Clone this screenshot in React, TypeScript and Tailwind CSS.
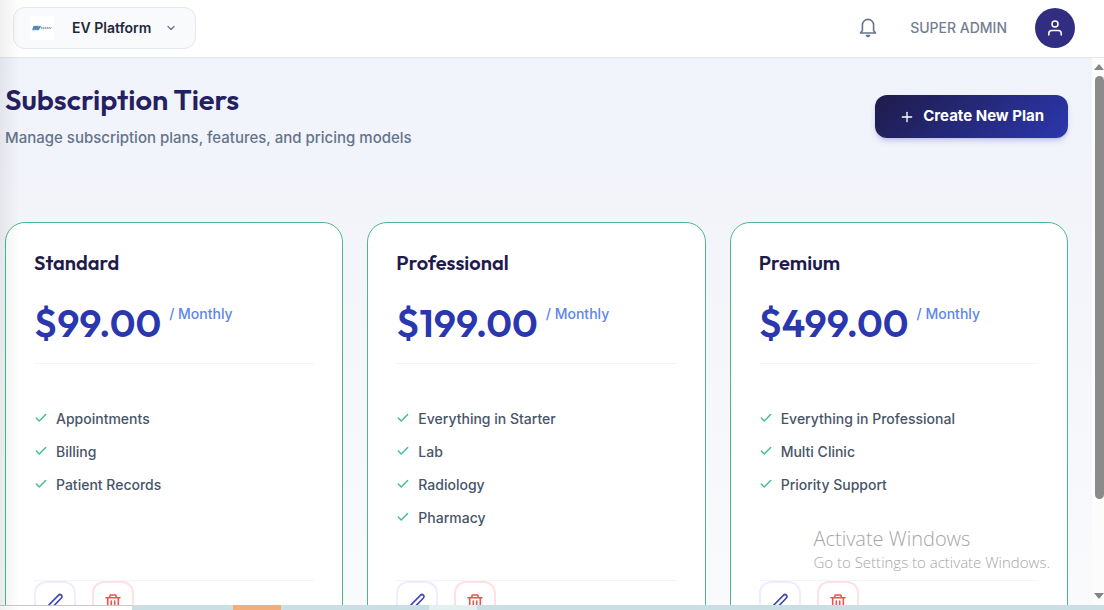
import React from "react";
import { Check, ChevronDown, Plus } from "lucide-react";

type Plan = { name: string; price: string; features: string[] };

const plans: Plan[] = [
  { name: "Standard", price: "$99.00", features: ["Appointments", "Billing", "Patient Records"] },
  { name: "Professional", price: "$199.00", features: ["Everything in Starter", "Lab", "Radiology", "Pharmacy"] },
  { name: "Premium", price: "$499.00", features: ["Everything in Professional", "Multi Clinic", "Priority Support"] },
];

function BellIcon() {
  return (
    <svg viewBox="0 0 24 24" className="h-6 w-6" fill="none" stroke="currentColor" strokeWidth="1.6" strokeLinecap="round" strokeLinejoin="round">
      <path d="M4.5 17h15M6.4 14.6V9a5.6 5.6 0 0 1 11.2 0v5.6M6.4 14.5L4.5 17M17.6 14.5l1.9 2.5" />
      <path d="M10.5 19.6h3l-1.5 1z" fill="currentColor" />
    </svg>
  );
}

function UserIcon() {
  return (
    <svg viewBox="0 0 16 16" className="h-4 w-4" fill="none" stroke="currentColor" strokeWidth="1.5" strokeLinecap="round">
      <circle cx="8" cy="4" r="3" />
      <path d="M1.8 15v-1.5a3 3 0 0 1 3-3h6.4a3 3 0 0 1 3 3V15" />
    </svg>
  );
}

function PencilIcon() {
  return (
    <svg viewBox="0 0 18 18" className="h-[18px] w-[18px]" fill="none" stroke="currentColor" strokeWidth="1.7" strokeLinejoin="round">
      <path d="M2 16l.8-4L12.6 2.2a1.9 1.9 0 0 1 2.8 2.8L5.8 14.9z" />
    </svg>
  );
}

function TrashIcon() {
  return (
    <svg viewBox="0 0 18 18" className="h-[18px] w-[18px]" fill="none" stroke="currentColor" strokeWidth="1.6" strokeLinecap="round" strokeLinejoin="round">
      <path d="M2 4.7h14M5.5 4.5l.8-2.5h5.4l.8 2.5M3.7 4.7V16h10.6V4.7M7.3 8v5M10.7 8v5" />
    </svg>
  );
}

function LogoMark() {
  return (
    <span className="flex h-6 w-6 items-center justify-center bg-white">
      <svg viewBox="0 0 20 6" className="h-[6px] w-5">
        <path d="M1.5.8h7L7 5.2H0z" fill="#78a9cf" />
        <path d="M1 2.2h4M.8 4h4M5 1l1 3.5L8.5 1" fill="none" stroke="#3972a5" strokeWidth="0.9" />
        <path d="M8.5 2.4h11M9 3.6h10" stroke="#7b828c" strokeWidth="0.8" strokeDasharray="1.5 .6" />
      </svg>
    </span>
  );
}

function PlanCard({ plan }: { plan: Plan }) {
  return (
    <article className="flex min-w-0 flex-col rounded-[20px] border border-[#4eb58c] bg-white px-7 pt-7">
      <h2 className="font-[Outfit,Lato,sans-serif] text-xl leading-6 font-semibold text-[#1e1b4b]">{plan.name}</h2>
      <div className="mt-6 flex h-[65px] items-start gap-2 border-b border-[#f1f5f9]">
        <span className="font-[Outfit,Lato,sans-serif] text-[39px] leading-12 font-semibold text-[#2b37ae]">{plan.price}</span>
        <span className="pt-[3px] text-sm leading-6 font-medium text-[#5b86ed]">/ Monthly</span>
      </div>
      <ul className="mt-11 flex min-h-[172px] flex-col gap-3">
        {plan.features.map((feature) => (
          <li key={feature} className="flex items-center gap-2 text-sm leading-[21px] font-medium text-[#475569]">
            <Check className="mb-0.5 h-[14px] w-[14px] text-[#45bd91]" strokeWidth={2.5} />
            {feature}
          </li>
        ))}
      </ul>
      <div className="flex gap-4 border-t border-[#f1f5f9] pb-7">
        <button aria-label={`Edit ${plan.name}`} className="flex h-[42px] w-[42px] items-center justify-center rounded-xl border-2 border-[#eeecff] text-[#4247b2]">
          <PencilIcon />
        </button>
        <button aria-label={`Delete ${plan.name}`} className="flex h-[42px] w-[42px] items-center justify-center rounded-xl border-2 border-[#fee2e2] text-[#e9544f]">
          <TrashIcon />
        </button>
      </div>
    </article>
  );
}

export default function App() {
  return (
    <div className="relative flex h-screen flex-col overflow-hidden bg-white font-[Inter,sans-serif]">
      <header className="flex h-[58px] shrink-0 items-center justify-between border-b border-[#e2e5e9] pr-[29px] pb-px pl-[13px]">
        <button className="flex h-[42px] items-center rounded-xl border border-[#e2e8f0] bg-[#f9fafc] px-4 text-sm font-semibold text-[#1e293b]">
          <LogoMark />
          <span className="ml-[18px]">EV Platform</span>
          <ChevronDown className="ml-[14px] h-3 w-3 text-[#64748b]" strokeWidth={2.5} />
          <span className="w-0.5" />
        </button>
        <div className="flex items-center">
          <button aria-label="Notifications" className="text-[#64748b]"><BellIcon /></button>
          <span className="ml-[30px] text-sm font-medium text-[#757e91]">SUPER ADMIN</span>
          <button aria-label="Account" className="ml-7 flex h-10 w-10 items-center justify-center rounded-full bg-[#312e81] text-white"><UserIcon /></button>
        </div>
      </header>
      <div className="flex min-h-0 flex-1">
        <main className="min-w-0 flex-1 overflow-hidden bg-linear-to-b from-[#f1f3fb] via-[#f4f6fa] to-[#f8fafc] pr-6 pl-[5px]">
          <div className="flex items-start justify-between pt-6">
            <div>
              <h1 className="font-[Outfit,Lato,sans-serif] text-[29px] leading-9 font-semibold text-[#242061]">Subscription Tiers</h1>
              <p className="mt-2 text-[15px] leading-6 font-medium text-[#64748b]">Manage subscription plans, features, and pricing models</p>
            </div>
            <button className="mt-[13px] flex h-[43px] items-center gap-2 rounded-xl bg-linear-135 from-[#1e1b4b] to-[#2b37ae] px-6 text-[15px] font-bold text-white shadow-md shadow-[#2b37ae]/20">
              <Plus className="h-4 w-4" strokeWidth={2} />
              Create New Plan
            </button>
          </div>
          <section className="mt-[72px] grid grid-cols-3 gap-6">
            {plans.map((plan) => <PlanCard key={plan.name} plan={plan} />)}
          </section>
        </main>
        <div className="flex w-3 shrink-0 flex-col items-end justify-between bg-[#fcfcfc] pt-[6px] pb-[6px]">
          <svg viewBox="0 0 10 6" className="h-[6px] w-[10px]"><path d="M0 6 5 0l5 6z" fill="#858585" /></svg>
          <div className="mt-[6px] mb-auto h-[79%] w-[9px] rounded-full bg-[#8b8b8b]" />
          <svg viewBox="0 0 10 6" className="h-[6px] w-[10px]"><path d="M0 0h10L5 6z" fill="#858585" /></svg>
        </div>
      </div>
      <footer className="flex h-[5px] shrink-0 bg-[#cadfe4]">
        <div className="w-[12%] border-t border-[#c8c8c8] bg-white" />
        <div className="w-[9.1%]" />
        <div className="w-[4.4%] bg-[#f3ae78]" />
        <div className="w-[13.4%]" />
        <div className="w-[4.3%] bg-[#e2f1ef]" />
      </footer>
      <div className="pointer-events-none absolute inset-y-0 left-0 w-5 bg-linear-to-r from-black/6 to-transparent" />
      <div className="pointer-events-none absolute right-[54px] bottom-[39px] font-['Open_Sans',sans-serif] font-light text-[#a6a6a6]">
        <p className="text-xl leading-7">Activate Windows</p>
        <p className="text-[15px] leading-[18px]">Go to Settings to activate Windows.</p>
      </div>
    </div>
  );
}
